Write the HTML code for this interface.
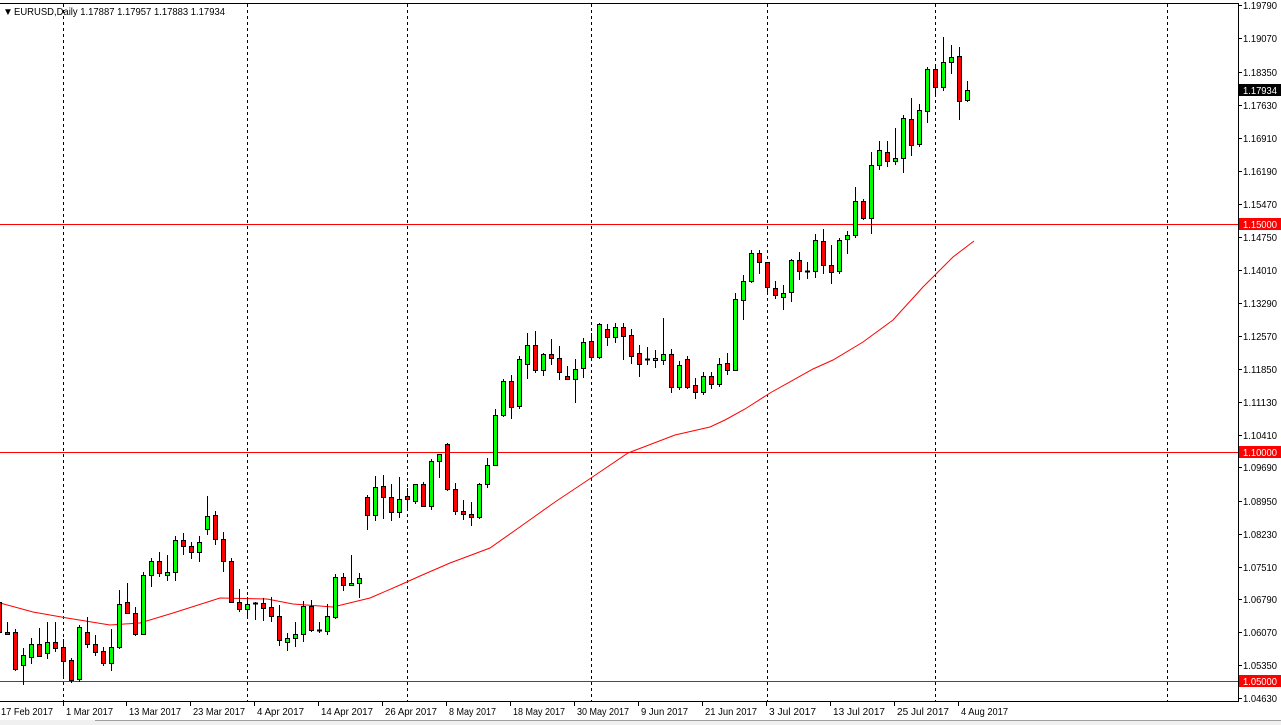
<!DOCTYPE html>
<html><head><meta charset="utf-8"><style>
html,body{margin:0;padding:0;background:#fff;width:1281px;height:725px;overflow:hidden}
svg{display:block;font-family:"Liberation Sans",sans-serif}
</style></head><body>
<svg id="s" width="1281" height="725" xmlns="http://www.w3.org/2000/svg" shape-rendering="crispEdges"></svg>
<script>
var s=document.getElementById('s'),h='';
h+='<rect x="0" y="0" width="1281" height="725" fill="#fff"/>';
h+='<line x1="0" y1="3.5" x2="1238" y2="3.5" stroke="#000"/>';
h+='<line x1="1238.5" y1="3" x2="1238.5" y2="702" stroke="#000"/>';
h+='<line x1="0" y1="701.5" x2="1238" y2="701.5" stroke="#000"/>';
[63,247,407,591,767,935,1167].forEach(function(x){h+='<line x1="'+(x+.5)+'" y1="4" x2="'+(x+.5)+'" y2="701" stroke="#000" stroke-dasharray="3,3"/>';});
[224,452,681].forEach(function(y){h+='<line x1="0" y1="'+(y+.5)+'" x2="1238" y2="'+(y+.5)+'" stroke="#f00"/>';});
var ma=[[0,603],[33,612],[67,618],[110,625],[140,623],[173,613],[220,598],[267,599],[293,604],[333,607],[370,598],[400,585],[420,576],[450,563],[490,548],[517,529],[555,502],[591,478],[628,453],[675,435],[710,427],[725,420],[745,409],[770,393],[813,369],[833,360],[863,342],[893,320],[923,287],[953,257],[974,241]];
h+='<polyline fill="none" stroke="#f00" stroke-width="1" shape-rendering="auto" points="'+ma.map(function(p){return p.join(',')}).join(' ')+'"/>';
var d=[[-1,602,632,598,636,'r'],[0,632,634,622,635,'r'],[1,632,669,629,671,'r'],[2,655,665,648,685,'g'],[3,644,657,638,664,'g'],[4,644,656,628,657,'r'],[5,642,653,622,659,'g'],[6,642,648,622,652,'r'],[7,647,661,639,677,'r'],[8,660,680,658,683,'r'],[9,627,679,625,682,'g'],[10,632,644,617,648,'r'],[11,644,652,635,656,'r'],[12,651,663,647,666,'r'],[13,647,663,629,671,'g'],[14,604,647,590,649,'g'],[15,602,613,583,613,'r'],[16,613,634,607,636,'r'],[17,575,634,572,634,'g'],[18,561,575,558,587,'g'],[19,561,573,552,577,'r'],[20,572,575,555,581,'g'],[21,540,572,536,581,'g'],[22,540,546,533,555,'r'],[23,546,552,542,559,'r'],[24,542,552,536,562,'g'],[25,516,529,496,535,'g'],[26,515,539,511,545,'r'],[27,539,561,532,572,'r'],[28,561,602,558,603,'r'],[29,602,609,589,612,'r'],[30,604,609,597,617,'g'],[31,603,604,602,620,'d'],[32,603,608,598,621,'r'],[33,607,616,597,622,'r'],[34,616,640,605,646,'r'],[35,638,642,633,651,'g'],[36,634,638,622,647,'g'],[37,606,634,601,642,'g'],[38,606,630,600,632,'r'],[39,630,631,622,633,'d'],[40,616,631,604,635,'g'],[41,577,617,574,619,'g'],[42,577,585,573,591,'r'],[43,583,585,555,586,'g'],[44,578,583,573,598,'g'],[45,497,515,495,530,'r'],[46,487,515,476,521,'g'],[47,486,497,475,519,'r'],[48,497,512,484,521,'r'],[49,499,512,477,518,'g'],[50,496,499,488,509,'r'],[51,484,501,484,504,'g'],[52,484,506,482,507,'r'],[53,461,506,459,510,'g'],[54,454,461,454,478,'g'],[55,444,489,443,491,'r'],[56,489,511,483,515,'r'],[57,511,514,500,520,'r'],[58,514,517,502,526,'r'],[59,484,517,483,519,'g'],[60,465,484,458,488,'g'],[61,415,465,409,465,'g'],[62,381,415,379,417,'g'],[63,381,407,375,419,'r'],[64,359,406,356,409,'g'],[65,345,364,333,379,'g'],[66,345,370,331,373,'r'],[67,354,370,353,376,'g'],[68,354,358,339,365,'r'],[69,358,372,346,380,'r'],[70,376,379,366,379,'r'],[71,369,379,359,403,'g'],[72,342,368,338,378,'g'],[73,341,357,333,357,'r'],[74,324,357,323,359,'g'],[75,329,337,324,346,'r'],[76,327,337,323,343,'g'],[77,327,336,323,360,'r'],[78,335,356,329,364,'r'],[79,353,364,345,377,'r'],[80,359,360,347,365,'d'],[81,358,360,350,368,'g'],[82,354,360,318,365,'g'],[83,354,387,349,393,'r'],[84,365,387,361,390,'g'],[85,359,387,356,389,'r'],[86,385,392,378,399,'r'],[87,376,392,372,395,'g'],[88,376,384,372,389,'r'],[89,364,384,358,387,'g'],[90,363,370,353,375,'r'],[91,299,370,293,371,'g'],[92,281,300,275,320,'g'],[93,253,281,250,283,'g'],[94,253,262,250,274,'r'],[95,262,287,262,293,'r'],[96,288,295,281,299,'r'],[97,293,297,285,310,'g'],[98,260,292,259,302,'g'],[99,260,271,252,280,'r'],[100,271,272,262,279,'d'],[101,240,271,234,278,'g'],[102,241,265,229,274,'r'],[103,265,272,245,284,'r'],[104,240,271,238,274,'g'],[105,235,239,231,254,'g'],[106,201,235,187,238,'g'],[107,201,218,199,220,'r'],[108,165,218,152,234,'g'],[109,150,165,141,170,'g'],[110,152,161,141,167,'r'],[111,158,161,128,165,'g'],[112,118,158,115,173,'g'],[113,119,145,98,156,'r'],[114,110,144,104,147,'g'],[115,69,111,67,123,'g'],[116,69,87,67,95,'r'],[117,62,87,37,91,'g'],[118,57,62,45,74,'g'],[119,56,101,47,120,'r'],[120,90,100,81,102,'g']];
d.forEach(function(c){var x=7+8*c[0];
 h+='<line x1="'+(x+.5)+'" y1="'+c[3]+'" x2="'+(x+.5)+'" y2="'+c[4]+'" stroke="#000"/>';
 if(c[5]=='d'){h+='<line x1="'+(x-2)+'" y1="'+(c[1]+.5)+'" x2="'+(x+3)+'" y2="'+(c[1]+.5)+'" stroke="#000" stroke-width="2"/>';}
 else h+='<rect x="'+(x-1.5)+'" y="'+(c[1]+.5)+'" width="4" height="'+Math.max(1,c[2]-c[1])+'" fill="'+(c[5]=='g'?'#00ff00':'#ff0000')+'" stroke="#000"/>';
});
var labs=[["1.19790",5],["1.19070",38],["1.18350",72],["1.17630",105],["1.16910",138],["1.16190",171],["1.15470",204],["1.14750",237],["1.14010",270],["1.13290",303],["1.12570",336],["1.11850",369],["1.11130",402],["1.10410",435],["1.09690",467],["1.08950",501],["1.08230",534],["1.07510",567],["1.06790",599],["1.06070",632],["1.05350",665],["1.04630",698]];
labs.forEach(function(l){h+='<line x1="1238" y1="'+(l[1]+.5)+'" x2="1242" y2="'+(l[1]+.5)+'" stroke="#000"/><text x="1243" y="'+(l[1]+4)+'" font-size="10.5" fill="#000" textLength="34" lengthAdjust="spacingAndGlyphs">'+l[0]+'</text>';});
[["1.17934",90,"#000"],["1.15000",224,"#f00"],["1.10000",452,"#f00"],["1.05000",681,"#f00"]].forEach(function(l){h+='<rect x="1239" y="'+(l[1]-6)+'" width="42" height="12" fill="'+l[2]+'"/><text x="1243" y="'+(l[1]+4)+'" font-size="10.5" fill="#fff" textLength="34" lengthAdjust="spacingAndGlyphs">'+l[0]+'</text>';});
var dt=[["17 Feb 2017",-2],["1 Mar 2017",63],["13 Mar 2017",126],["23 Mar 2017",190],["4 Apr 2017",254],["14 Apr 2017",318],["26 Apr 2017",382],["8 May 2017",446],["18 May 2017",510],["30 May 2017",574],["9 Jun 2017",638],["21 Jun 2017",702],["3 Jul 2017",766],["13 Jul 2017",830],["25 Jul 2017",894],["4 Aug 2017",958]];
dt.forEach(function(t){var w=Math.round(t[0].length*4.7);h+='<line x1="'+(t[1]+.5)+'" y1="702" x2="'+(t[1]+.5)+'" y2="706" stroke="#000"/><text x="'+(t[1]+3)+'" y="715" font-size="10.5" fill="#000" textLength="'+w+'" lengthAdjust="spacingAndGlyphs">'+t[0]+'</text>';});
h+='<rect x="0" y="720" width="1281" height="5" fill="#f0f0f0"/><rect x="95" y="720" width="1186" height="1" fill="#a0a0a0"/>';
h+='<text x="3" y="15" font-size="10" fill="#000">▼</text><text x="14" y="15" font-size="10.5" fill="#000" textLength="211" lengthAdjust="spacingAndGlyphs">EURUSD,Daily  1.17887 1.17957 1.17883 1.17934</text>';
s.innerHTML=h;
</script>
</body></html>
